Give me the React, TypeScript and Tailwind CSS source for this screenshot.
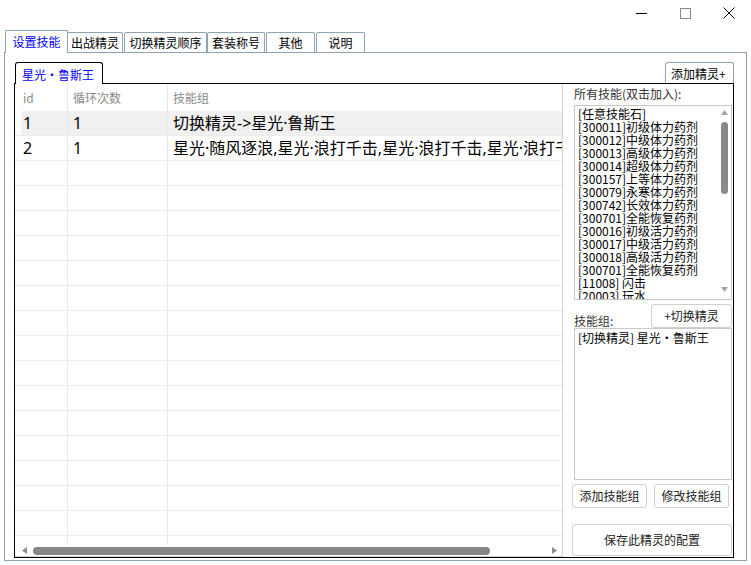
import React from "react";

const skills = [
  "[任意技能石]",
  "[300011]初级体力药剂",
  "[300012]中级体力药剂",
  "[300013]高级体力药剂",
  "[300014]超级体力药剂",
  "[300157]上等体力药剂",
  "[300079]永寒体力药剂",
  "[300742]长效体力药剂",
  "[300701]全能恢复药剂",
  "[300016]初级活力药剂",
  "[300017]中级活力药剂",
  "[300018]高级活力药剂",
  "[300701]全能恢复药剂",
  "[11008] 闪击",
  "[20003] 玩水",
];

const rows: { id: string; n: string; g: string }[] = [
  { id: "1", n: "1", g: "切换精灵->星光·鲁斯王" },
  { id: "2", n: "1", g: "星光·随风逐浪,星光·浪打千击,星光·浪打千击,星光·浪打千击,星光·浪打千击" },
  ...Array.from({ length: 18 }, () => ({ id: "", n: "", g: "" })),
];

function Tab({ label, w, ml }: { label: string; w: string; ml: string }) {
  return (
    <div
      className={`${w} ${ml} h-[20px] border border-b-0 border-[#8fa3b3] rounded-t-[2px] bg-white flex items-center justify-center text-[12px] leading-none text-black whitespace-nowrap`}
    >
      {label}
    </div>
  );
}

export default function App() {
  return (
    <div className="w-[751px] h-[565px] bg-white overflow-hidden font-['Noto_Sans_CJK_SC',sans-serif] text-black">
      {/* title bar */}
      <div className="h-[30px] flex pl-[619px] pt-[2px]">
        <div className="w-[45px] h-[22px] flex items-center justify-center">
          <svg width="11" height="11" viewBox="0 0 11 11">
            <line x1="0" y1="5.5" x2="11" y2="5.5" stroke="#000" strokeWidth="1" />
          </svg>
        </div>
        <div className="w-[45px] h-[22px] flex items-center justify-center">
          <svg width="11" height="11" viewBox="0 0 11 11">
            <rect x="0.5" y="0.5" width="10" height="10" fill="none" stroke="#8a8a8a" strokeWidth="1" />
          </svg>
        </div>
        <div className="w-[45px] h-[22px] flex items-center justify-center">
          <svg width="12" height="12" viewBox="0 0 12 12">
            <line x1="0.5" y1="0.5" x2="11.5" y2="11.5" stroke="#000" strokeWidth="1" />
            <line x1="11.5" y1="0.5" x2="0.5" y2="11.5" stroke="#000" strokeWidth="1" />
          </svg>
        </div>
      </div>

      {/* main tabs */}
      <div className="flex items-end h-[22px] pl-[5px]">
        <div className="relative z-10 w-[63px] h-[23px] -mb-px border border-b-0 border-[#8fa3b3] rounded-t-[2px] bg-white flex items-center justify-center text-[12px] leading-none text-[#0000ff] whitespace-nowrap">
          设置技能
        </div>
        <Tab label="出战精灵" w="w-[56px]" ml="-ml-px" />
        <Tab label="切换精灵顺序" w="w-[83px]" ml="ml-[1px]" />
        <Tab label="套装称号" w="w-[58px]" ml="ml-0" />
        <Tab label="其他" w="w-[49px]" ml="ml-[1px]" />
        <Tab label="说明" w="w-[49px]" ml="ml-[1px]" />
      </div>

      {/* tab panel */}
      <div className="ml-[4px] w-[743px] h-[509px] border border-[#8fa3b3] pt-[9px] pl-[9px]">
        <div className="flex h-[21px] w-[720px] items-end">
          <div className="relative z-10 ml-px w-[88px] h-[22px] -mb-px border border-b-0 border-black rounded-t-[3px] bg-white text-[12px] leading-none text-[#0000ff] flex items-center pl-[6px] pt-[2px] whitespace-nowrap">
            星光·鲁斯王
          </div>
          <div className="ml-auto w-[69px] h-[21px] border border-b-0 border-[#8fa3b3] rounded-t-[3px] bg-white text-[12px] leading-none flex items-center pl-[5px] pt-[1px] whitespace-nowrap">
            添加精灵+
          </div>
        </div>

        <div className="w-[720px] h-[475px] border border-black flex">
          {/* grid */}
          <div className="w-[548px] h-full border-r border-[#d4d4d4] flex flex-col">
            <div className="flex-1 overflow-hidden">
              <div className="flex h-[27px] text-[12px] text-[#8a8a8a]">
                <div className="w-[6px]" />
                <div className="w-[47px] border-r border-[#e8e8e8] pl-[2px] flex items-center">id</div>
                <div className="w-[100px] border-r border-[#e8e8e8] pl-[5px] flex items-center">循环次数</div>
                <div className="flex-1 pl-[5px] flex items-center">技能组</div>
              </div>
              {rows.map((r, i) => (
                <div
                  key={i}
                  className="flex h-[25px] border-b border-[#ececec] text-[16px] leading-none font-['Noto_Sans','Noto_Sans_CJK_SC',sans-serif]"
                >
                  <div className="w-[6px] shrink-0" />
                  <div className={`flex flex-1 min-w-0 ${i === 0 ? "bg-[#f0f0f0]" : ""}`}>
                    <div className="w-[47px] shrink-0 border-r border-[#e8e8e8] pl-[2px] flex items-center">{r.id}</div>
                    <div className="w-[100px] shrink-0 border-r border-[#e8e8e8] pl-[5px] flex items-center">{r.n}</div>
                    <div className="flex-1 min-w-0 pl-[5px] flex items-center overflow-hidden whitespace-nowrap">{r.g}</div>
                  </div>
                </div>
              ))}
            </div>
            {/* horizontal scrollbar */}
            <div className="h-[12px] border-b border-[#d4d4d4] flex items-center pl-[7px] pr-[5px]">
              <svg width="5" height="7" viewBox="0 0 5 7">
                <polygon points="5,0 0,3.5 5,7" fill="#8c8c8c" />
              </svg>
              <div className="ml-[6px] w-[457px] h-[8px] rounded-full bg-[#868686]" />
              <div className="flex-1" />
              <svg width="5" height="7" viewBox="0 0 5 7">
                <polygon points="0,0 5,3.5 0,7" fill="#8c8c8c" />
              </svg>
            </div>
          </div>

          {/* right panel */}
          <div className="w-[170px] h-full flex flex-col pl-[11px] pt-[3px]">
            <div className="h-[14px] text-[12px] leading-[14px] text-[#333] whitespace-nowrap">所有技能(双击加入):</div>
            <div className="mt-[4px] w-[158px] h-[195px] border border-[#c9c9c9] flex">
              <div className="flex-1 min-w-0 overflow-hidden pl-[3px] pt-[1px] text-[12px] leading-[13px] whitespace-nowrap">
                {skills.map((s, i) => (
                  <div key={i} className="h-[13px]">{s}</div>
                ))}
              </div>
              <div className="w-[14px] shrink-0 flex flex-col items-center pt-[4px] pb-[7px]">
                <svg width="7" height="5" viewBox="0 0 7 5">
                  <polygon points="0,5 3.5,0 7,5" fill="#a3a3a3" />
                </svg>
                <div className="mt-[7px] w-[7px] h-[72px] rounded-full bg-[#8a8a8a]" />
                <div className="flex-1" />
                <svg width="7" height="5" viewBox="0 0 7 5">
                  <polygon points="0,0 7,0 3.5,5" fill="#a3a3a3" />
                </svg>
              </div>
            </div>
            <div className="mt-[4px] w-[158px] h-[24px] flex items-end justify-between">
              <div className="text-[12px] leading-[14px] text-[#333]">技能组:</div>
              <div className="w-[81px] h-[24px] border border-[#cfcfcf] rounded-[3px] bg-white flex items-center justify-center text-[12px] leading-none text-[#222] whitespace-nowrap">
                +切换精灵
              </div>
            </div>
            <div className="w-[158px] h-[152px] border border-[#c9c9c9] pl-[3px] pt-[2px] text-[12px] leading-[14px] whitespace-nowrap">
              [切换精灵] 星光·鲁斯王
            </div>
            <div className="mt-[4px] -ml-[2px] flex gap-[7px]">
              <div className="w-[75px] h-[24px] border border-[#cfcfcf] rounded-[3px] bg-white flex items-center justify-center text-[12px] leading-none text-[#222]">
                添加技能组
              </div>
              <div className="w-[75px] h-[24px] border border-[#cfcfcf] rounded-[3px] bg-white flex items-center justify-center text-[12px] leading-none text-[#222]">
                修改技能组
              </div>
            </div>
            <div className="mt-[16px] -ml-[2px] w-[160px] h-[32px] border border-[#cfcfcf] rounded-[3px] bg-white flex items-center justify-center text-[12px] leading-none text-[#222]">
              保存此精灵的配置
            </div>
          </div>
        </div>
      </div>
    </div>
  );
}
